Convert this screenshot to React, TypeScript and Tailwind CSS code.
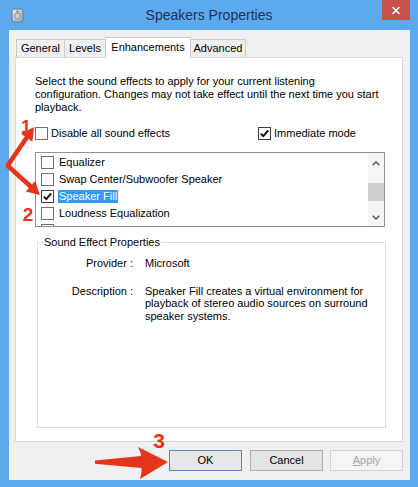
import React from "react";

function Check({ checked, dark }: { checked?: boolean; dark?: boolean }) {
  return (
    <span
      className={`w-[13px] h-[13px] shrink-0 border ${
        dark ? "border-[#3a3a3a]" : "border-[#707070]"
      } bg-white flex items-center justify-center`}
    >
      {checked && (
        <svg width="11" height="11" viewBox="0 0 11 11">
          <path d="M1.8 5.6 L4.3 8.2 L9.2 2.4" fill="none" stroke="#111" strokeWidth="1.9" />
        </svg>
      )}
    </span>
  );
}

const items = [
  "Equalizer",
  "Swap Center/Subwoofer Speaker",
  "Speaker Fill",
  "Loudness Equalization",
  "",
];

export default function App() {
  return (
    <div
      className="relative w-[418px] h-[487px] bg-[#5ca9ef] flex flex-col overflow-hidden text-[11px] text-black"
      style={{ fontFamily: '"Liberation Sans", Arial, sans-serif' }}
    >
      {/* Title bar */}
      <div className="h-[30px] flex items-start shrink-0">
        <div className="w-[36px] pl-[11px] pt-[8px]">
          <svg width="13" height="15" viewBox="0 0 13 15">
            <defs>
              <linearGradient id="ig" x1="0" y1="0" x2="1" y2="1">
                <stop offset="0" stopColor="#e9ecef" />
                <stop offset="1" stopColor="#9aa3ad" />
              </linearGradient>
            </defs>
            <rect x="1" y="1" width="11" height="13" rx="2" fill="url(#ig)" stroke="#6f7780" strokeWidth="1" />
            <circle cx="6.5" cy="8" r="3" fill="#c9ced4" stroke="#7d858e" strokeWidth="0.8" />
            <circle cx="6.5" cy="3.6" r="1.2" fill="#7d858e" />
          </svg>
        </div>
        <div className="flex-1 text-center text-[14px] leading-[30px] text-[#1d3350]">
          Speakers Properties
        </div>
        <div className="w-[36px] pr-[8px]">
          <div className="w-[28px] h-[20px] bg-[#c7504b] flex items-center justify-center">
            <svg width="10" height="9" viewBox="0 0 10 9">
              <path d="M1.5 1 L8.5 8 M8.5 1 L1.5 8" stroke="#fff" strokeWidth="1.7" />
            </svg>
          </div>
        </div>
      </div>

      {/* Body */}
      <div className="ml-[9px] w-[401px] h-[450px] bg-[#f0f0f0] flex flex-col shrink-0">
        {/* Tabs */}
        <div className="h-[27px] pt-[7px] pl-[7px] flex items-end shrink-0">
          <div className="w-[49px] h-[18px] border border-b-0 border-[#cbcbcb] bg-[#f0f0f0] flex items-center justify-center">
            General
          </div>
          <div className="-ml-px w-[42px] h-[18px] border border-b-0 border-[#cbcbcb] bg-[#f0f0f0] flex items-center justify-center">
            Levels
          </div>
          <div className="-ml-px relative z-10 -mb-px w-[86px] h-[21px] border border-b-0 border-[#cbcbcb] bg-white flex items-center justify-center pb-[2px]">
            Enhancements
          </div>
          <div className="-ml-px w-[56px] h-[18px] border border-b-0 border-[#cbcbcb] bg-[#f0f0f0] flex items-center justify-center">
            Advanced
          </div>
        </div>

        {/* Panel */}
        <div className="ml-[6px] w-[388px] h-[385px] bg-white border border-[#d9d9d9] pl-[19px] pt-[17px] flex flex-col shrink-0">
          <p className="leading-[13px] w-[350px]">
            Select the sound effects to apply for your current listening
            <br />
            configuration. Changes may not take effect until the next time you start
            <br />
            playback.
          </p>

          <div className="mt-[13px] h-[13px] flex items-center">
            <div className="w-[223px] flex items-center">
              <Check />
              <span className="ml-[3px] leading-[13px]">Disable all sound effects</span>
            </div>
            <div className="flex items-center">
              <Check checked dark />
              <span className="ml-[3px] leading-[13px]">Immediate mode</span>
            </div>
          </div>

          {/* List box */}
          <div className="mt-[12px] w-[350px] h-[75px] border border-[#8e9298] bg-white flex overflow-hidden shrink-0">
            <div className="flex-1 flex flex-col pt-[1px] overflow-hidden">
              {items.map((t, i) => (
                <div key={i} className="h-[17px] shrink-0 flex items-center pl-[5px]">
                  <Check checked={i === 2} dark={i === 2} />
                  {t && (
                    <span
                      className={`ml-[4px] px-[1px] leading-[13px] ${
                        i === 2 ? "bg-[#3399ff] text-white" : ""
                      }`}
                    >
                      {t}
                    </span>
                  )}
                </div>
              ))}
            </div>
            <div className="w-[16px] bg-[#f5f5f5] flex flex-col items-center shrink-0">
              <div className="h-[20px] flex items-center justify-center">
                <svg width="8" height="5" viewBox="0 0 8 5">
                  <path d="M0.7 4.3 L4 1 L7.3 4.3" fill="none" stroke="#505050" strokeWidth="1.4" />
                </svg>
              </div>
              <div className="mt-[10px] w-[16px] h-[18px] bg-[#cdcdcd]" />
              <div className="flex-1" />
              <div className="h-[17px] flex items-center justify-center">
                <svg width="8" height="5" viewBox="0 0 8 5">
                  <path d="M0.7 0.7 L4 4 L7.3 0.7" fill="none" stroke="#505050" strokeWidth="1.4" />
                </svg>
              </div>
            </div>
          </div>

          {/* Group box */}
          <fieldset className="mt-[9px] ml-[2px] w-[349px] h-[192px] border border-[#dcdcdc] shrink-0">
            <legend className="ml-[5px] px-[1px] leading-[13px]">Sound Effect Properties</legend>
            <div className="mt-[8px] grid grid-cols-[95px_1fr] gap-x-[12px] gap-y-[15px] leading-[12.5px]">
              <div className="text-right">Provider :</div>
              <div>Microsoft</div>
              <div className="text-right">Description :</div>
              <div>
                Speaker Fill creates a virtual environment for
                <br />
                playback of stereo audio sources on surround
                <br />
                speaker systems.
              </div>
            </div>
          </fieldset>
        </div>

        {/* Buttons */}
        <div className="mt-[8px] pr-[7px] flex justify-end gap-[8px]">
          <button className="w-[73px] h-[21px] border border-[#4d8bc4] bg-[#e6e6e6] flex items-center justify-center">
            OK
          </button>
          <button className="w-[73px] h-[21px] border border-[#adadad] bg-[#e3e3e3] flex items-center justify-center">
            Cancel
          </button>
          <button className="-ml-px w-[73px] h-[21px] border border-[#d3d3d3] bg-[#f4f4f4] text-[#a6a6a6] flex items-center justify-center">
            <span className="underline">A</span>pply
          </button>
        </div>
      </div>

      {/* Annotations overlay */}
      <svg
        className="absolute inset-0 pointer-events-none"
        width="418"
        height="487"
        viewBox="0 0 418 487"
      >
        <defs>
          <filter id="glow" x="-20%" y="-20%" width="140%" height="140%">
            <feGaussianBlur stdDeviation="0.6" />
          </filter>
        </defs>
        <g fill="#e5341c" stroke="none">
          {/* arrow 1 */}
          <path d="M8 165 L26.6 137.7" stroke="#e5341c" strokeWidth="4.6" strokeLinecap="round" fill="none" />
          <polygon points="34,127 32.4,141.7 20.9,133.8" />
          {/* arrow 2 */}
          <path d="M8 166 L30.4 186.3" stroke="#e5341c" strokeWidth="4.6" strokeLinecap="round" fill="none" />
          <polygon points="40,195 25.7,191.5 35.1,181.1" />
          {/* arrow 3 */}
          <path d="M95 460.6 L141 456 Q141 452 138 447 L168 462 L140 479 Q142 472 141.5 468 L95 463.8 Z" />
          <text x="26" y="133" fontSize="18" fontWeight="700" textAnchor="middle" style={{ fontFamily: '"Liberation Sans", Arial, sans-serif' }}>1</text>
          <text x="28" y="221" fontSize="19" fontWeight="700" textAnchor="middle" style={{ fontFamily: '"Liberation Sans", Arial, sans-serif' }}>2</text>
          <text x="159" y="448" fontSize="21" fontWeight="700" textAnchor="middle" style={{ fontFamily: '"Liberation Sans", Arial, sans-serif' }}>3</text>
        </g>
      </svg>
    </div>
  );
}
